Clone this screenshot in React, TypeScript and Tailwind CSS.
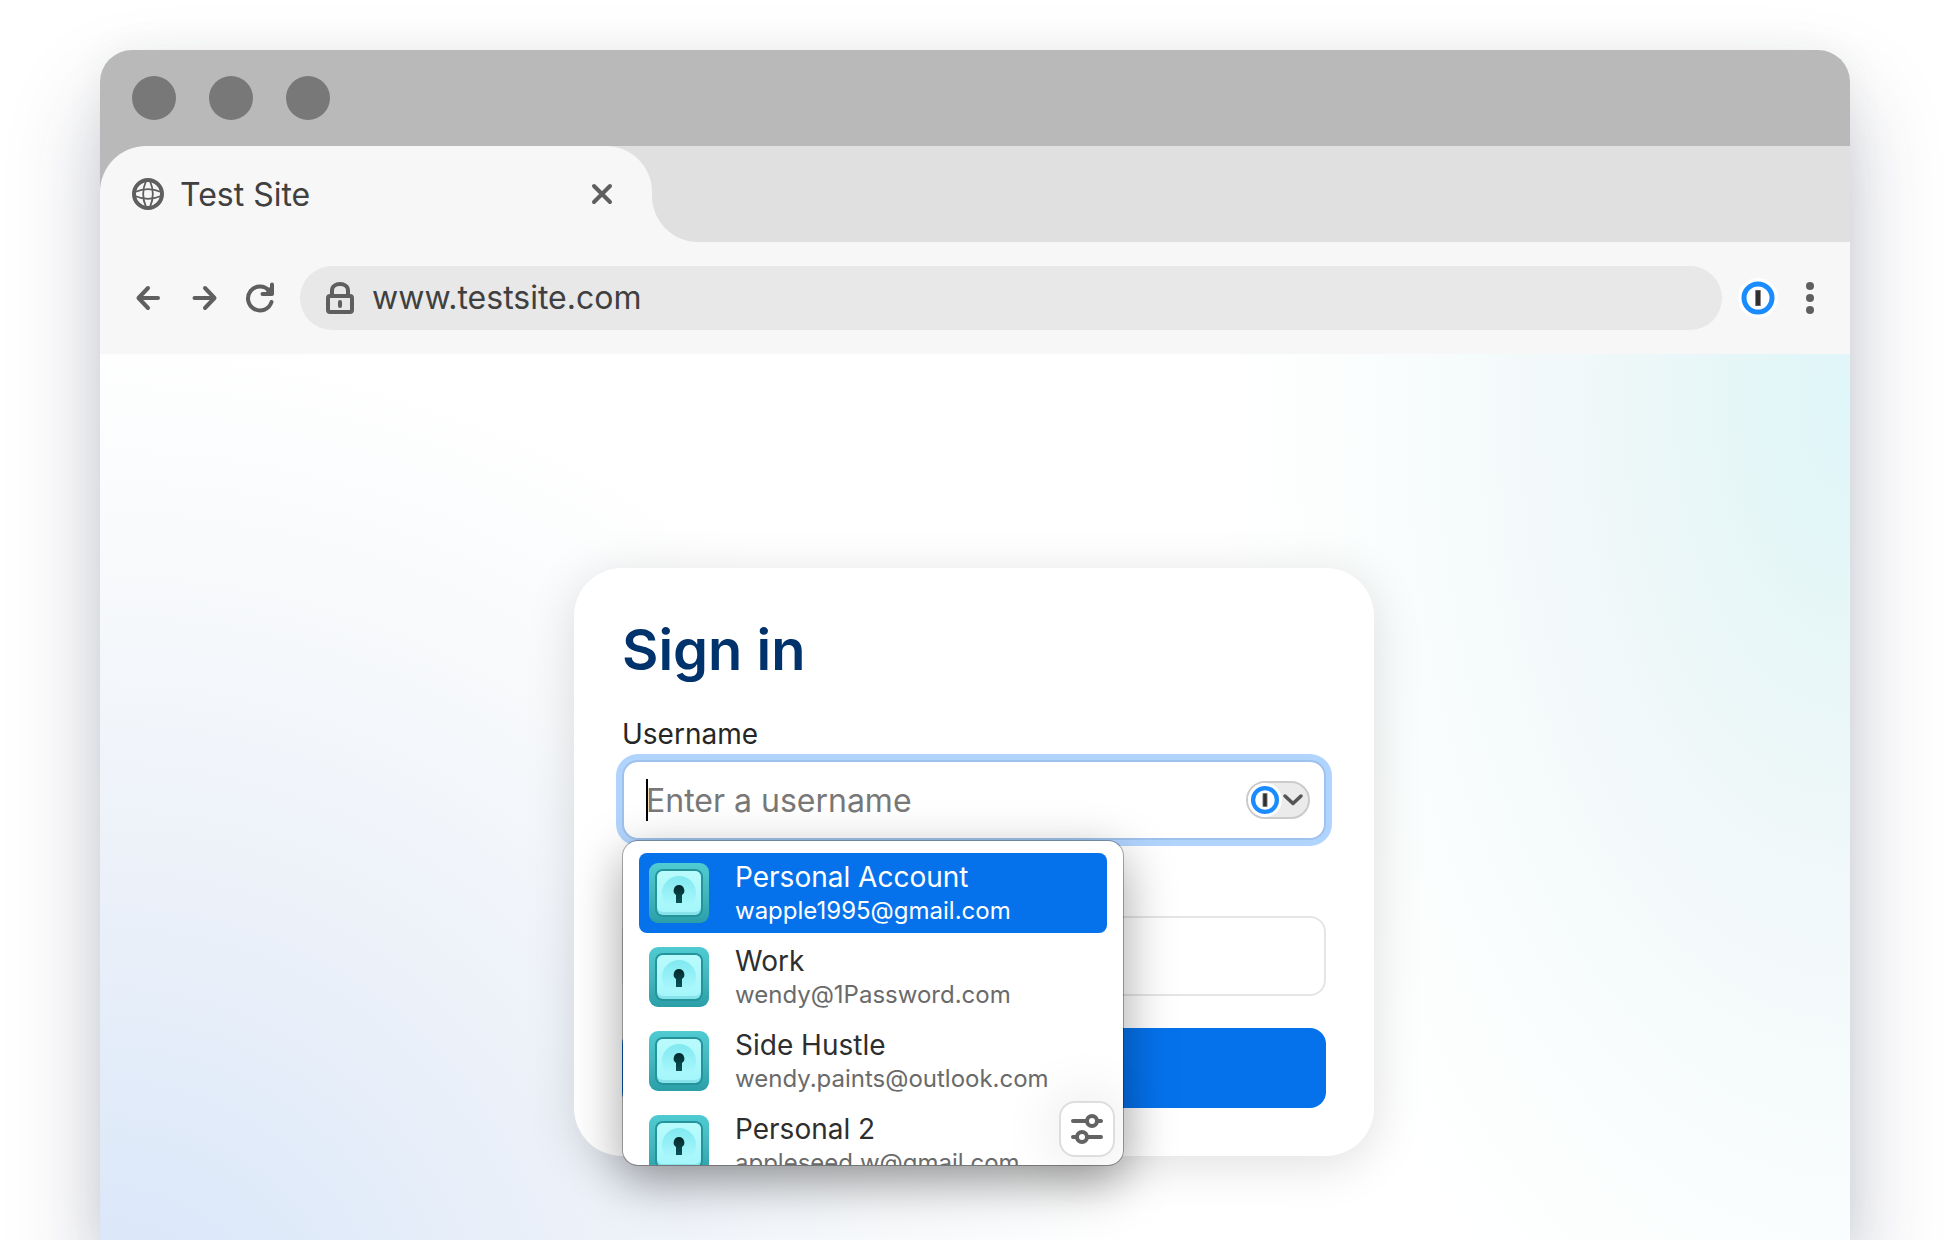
import React from "react";

const accounts = [
  { name: "Personal Account", email: "wapple1995@gmail.com" },
  { name: "Work", email: "wendy@1Password.com" },
  { name: "Side Hustle", email: "wendy.paints@outlook.com" },
  { name: "Personal 2", email: "appleseed.w@gmail.com" },
];

function Globe() {
  return (
    <svg className="size-8 shrink-0" viewBox="0 0 32 32" fill="none" stroke="#5f5f5f" aria-hidden="true">
      <circle cx="16" cy="16" r="14" strokeWidth="4" />
      <path d="M14 3C10.5 11 10.5 21 14 29M18 3C21.5 11 21.5 21 18 29" strokeWidth="1.800" />
      <path d="M3 14C11 10.500 21 10.500 29 14M3 18C11 21.500 21 21.500 29 18" strokeWidth="1.800" />
    </svg>
  );
}

function Close() {
  return (
    <svg className="size-8" viewBox="0 0 32 32" fill="none" stroke="#5f5f5f" strokeWidth="4" strokeLinecap="round" aria-hidden="true">
      <path d="M8 8l16 16M24 8L8 24" />
    </svg>
  );
}

function ArrowLeft() {
  return (
    <svg className="size-8" viewBox="0 0 32 32" fill="none" stroke="#5f5f5f" strokeWidth="4" strokeLinecap="round" strokeLinejoin="round" aria-hidden="true">
      <path d="M26 16H7M16 6L6.500 16L16 26" />
    </svg>
  );
}

function ArrowRight() {
  return (
    <svg className="size-8" viewBox="0 0 32 32" fill="none" stroke="#5f5f5f" strokeWidth="4" strokeLinecap="round" strokeLinejoin="round" aria-hidden="true">
      <path d="M6.500 16H26M17 6L26.500 16L17 26" />
    </svg>
  );
}

function Reload() {
  return (
    <svg className="size-8" viewBox="0 0 32 32" fill="none" stroke="#5f5f5f" strokeWidth="4" strokeLinecap="round" strokeLinejoin="round" aria-hidden="true">
      <path d="M27.500 20A12 12 0 1 1 25 8.500" />
      <path d="M28 2.500V12H18.500" />
      <path d="M23 6L28 5V11H22Z" fill="#5f5f5f" stroke="none" />
    </svg>
  );
}

function Lock() {
  return (
    <svg className="size-8 shrink-0" viewBox="0 0 32 32" fill="none" stroke="#5f5f5f" aria-hidden="true">
      <rect x="4" y="14" width="24" height="16" rx="2" strokeWidth="4" />
      <path d="M8 14V8.500C8 4.500 11.500 2 16 2S24 4.500 24 8.500V14" strokeWidth="4" />
      <path d="M16 20V24" strokeWidth="4" strokeLinecap="round" />
    </svg>
  );
}

function KeyholeRing({ className }: { className: string }) {
  return (
    <svg className={className} viewBox="0 0 40 40" aria-hidden="true">
      <circle cx="20" cy="20" r="20" fill="#fff" />
      <circle cx="20" cy="20" r="14" fill="#fff" stroke="#1a8cff" strokeWidth="5" />
      <rect x="17" y="12" width="6" height="16" fill="#888" />
      <rect x="18" y="12.500" width="4" height="15" fill="#2f2f2f" />
    </svg>
  );
}

function VaultIcon() {
  return (
    <svg className="size-[60px] shrink-0" viewBox="0 0 60 60" aria-hidden="true">
      <defs>
        <linearGradient id="vault-frame" x1="0" y1="0" x2="0" y2="1">
          <stop offset="0" stopColor="#50cbd2" />
          <stop offset="0.500" stopColor="#43b7bd" />
          <stop offset="1" stopColor="#2a9fa8" />
        </linearGradient>
        <linearGradient id="vault-door" x1="0" y1="0" x2="0" y2="1">
          <stop offset="0" stopColor="#b9fbfd" />
          <stop offset="1" stopColor="#a4f6fb" />
        </linearGradient>
        <linearGradient id="vault-dial" x1="0" y1="0" x2="0" y2="1">
          <stop offset="0" stopColor="#80e9f0" />
          <stop offset="0.850" stopColor="#a8f7fb" />
        </linearGradient>
        <linearGradient id="vault-hole" x1="0" y1="0" x2="0" y2="1">
          <stop offset="0" stopColor="#03292c" />
          <stop offset="1" stopColor="#0a5257" />
        </linearGradient>
      </defs>
      <rect width="60" height="60" rx="9" fill="url(#vault-frame)" />
      <rect x="6" y="6" width="48" height="48" rx="8" fill="#24949c" />
      <rect x="8" y="8" width="44" height="44" rx="6" fill="#85e3e9" />
      <rect x="8" y="8" width="44" height="41" rx="6" fill="url(#vault-door)" />
      <circle cx="30" cy="30" r="17" fill="url(#vault-dial)" />
      <path d="M30 22a5.500 5.500 0 0 1 3 10v8h-6v-8a5.500 5.500 0 0 1 3-10Z" fill="url(#vault-hole)" />
    </svg>
  );
}

function Sliders() {
  return (
    <svg className="size-8" viewBox="0 0 32 32" fill="none" stroke="#636363" strokeWidth="4" strokeLinecap="round" aria-hidden="true">
      <path d="M2 8H30M2 24H30" />
      <circle cx="21" cy="8" r="5" fill="#fff" />
      <circle cx="11" cy="24" r="5" fill="#fff" />
    </svg>
  );
}

function AccountMenu() {
  return (
    <div className="absolute top-full left-0 z-10 h-[326px] w-[502px] rounded-2xl border border-black/30 bg-white bg-clip-padding shadow-[0_16px_50px_rgba(0,0,0,0.36)]">
      <ul className="flex h-full flex-col gap-1 overflow-hidden rounded-[15px] px-4 pt-3">
        {accounts.map((account, i) => (
          <li key={account.email} className="shrink-0">
            <button
              type="button"
              className={
                i === 0
                  ? "flex h-20 w-full items-center gap-[26px] rounded-lg bg-[#0572ec] px-2.5 text-left text-white"
                  : "flex h-20 w-full items-center gap-[26px] rounded-lg px-2.5 text-left text-[#2e2e2e]"
              }
            >
              <VaultIcon />
              <span className="flex flex-col">
                <span className="text-[28px] leading-9">{account.name}</span>
                <span className={i === 0 ? "text-2xl leading-8" : "text-2xl leading-8 text-[#6a6a6a]"}>{account.email}</span>
              </span>
            </button>
          </li>
        ))}
      </ul>
      <button
        type="button"
        aria-label="Filter accounts"
        className="absolute right-2 bottom-2 flex size-14 items-center justify-center rounded-2xl border-2 border-[#dedede] bg-white shadow-[0_0_60px_rgba(0,0,0,0.12)]"
      >
        <Sliders />
      </button>
    </div>
  );
}

export default function App() {
  return (
    <div className="flex min-h-screen flex-col overflow-hidden bg-white px-[100px] pt-[50px] font-['Inter',sans-serif]">
      <div className="flex grow flex-col rounded-t-[32px] shadow-[0_50px_90px_rgba(40,45,80,0.26),0_0_40px_rgba(0,0,0,0.05)]">
        <header>
          <div className="flex h-24 items-center gap-[33px] rounded-t-[32px] bg-[#b9b9b9] px-8">
            <span className="size-11 rounded-full bg-[#787878]" />
            <span className="size-11 rounded-full bg-[#787878]" />
            <span className="size-11 rounded-full bg-[#787878]" />
          </div>
          <div className="flex h-24 bg-[#f7f7f7]">
            <div className="w-[552px] bg-linear-to-r from-[#b9b9b9] from-50% to-[#e0e0e0] to-50%">
              <div className="flex h-full items-center gap-4 rounded-t-[46px] bg-[#f7f7f7] pr-[34px] pl-8">
                <Globe />
                <span className="grow text-[32px] leading-[41px] text-[#404040]">Test Site</span>
                <button type="button" aria-label="Close tab">
                  <Close />
                </button>
              </div>
            </div>
            <div className="grow rounded-bl-[46px] bg-[#e0e0e0]" />
          </div>
          <div className="flex h-28 items-center bg-[#f7f7f7] pr-6 pl-8">
            <nav className="flex gap-6 pr-6">
              <button type="button" aria-label="Back">
                <ArrowLeft />
              </button>
              <button type="button" aria-label="Forward">
                <ArrowRight />
              </button>
              <button type="button" aria-label="Reload">
                <Reload />
              </button>
            </nav>
            <div className="flex h-16 grow items-center gap-4 rounded-full bg-[#e8e8e8] px-6">
              <Lock />
              <input
                type="text"
                aria-label="Address"
                defaultValue="www.testsite.com"
                className="h-10 min-w-0 grow bg-transparent text-[32px] leading-10 text-[#404040] outline-none"
              />
            </div>
            <button type="button" aria-label="Password manager" className="ml-4">
              <KeyholeRing className="size-10" />
            </button>
            <button type="button" aria-label="Menu" className="ml-4 flex w-8 flex-col items-center gap-1">
              <span className="size-2 rounded-full bg-[#5f5f5f]" />
              <span className="size-2 rounded-full bg-[#5f5f5f]" />
              <span className="size-2 rounded-full bg-[#5f5f5f]" />
            </button>
          </div>
        </header>
        <main className="grow bg-white bg-[radial-gradient(ellipse_36%_125%_at_100%_5%,#dff6fa_0%,#e4f6f7_14%,#f0f8f9_42%,#fafdfd_75%,#ffffff00_100%),radial-gradient(ellipse_60%_118%_at_0%_115%,#d8e5fa_0%,#dde9f9_18%,#ecf1f9_48%,#f7f9fb_76%,#ffffff00_100%)] pt-[214px] pr-0.5">
          <form className="mx-auto max-w-[800px] rounded-[48px] bg-white p-12 shadow-[0_8px_50px_rgba(0,0,0,0.13)]">
            <h1 className="text-[56px] leading-[68px] font-semibold text-[#00326b]">Sign in</h1>
            <label htmlFor="username" className="mt-8 mb-2 block text-[28px] leading-9 text-[#262626]">
              Username
            </label>
            <div className="relative">
              <input
                id="username"
                type="text"
                placeholder="Enter a username"
                className="block h-20 w-full rounded-2xl border-2 border-[#9fc2ec] bg-white pr-24 pl-[22px] text-[32px] text-[#222] ring-6 ring-[#b1d4fe] outline-none placeholder:text-[#787878]"
              />
              <span className="absolute top-[19px] left-6 h-[42px] w-0.5 bg-black" />
              <button
                type="button"
                aria-label="Show saved accounts"
                className="absolute top-[21px] right-4 flex h-[38px] w-16 items-center justify-between rounded-full border-2 border-[#cbcbcb] bg-[#ebebeb] pr-1"
              >
                <KeyholeRing className="size-[34px]" />
                <svg className="size-[22px]" viewBox="0 0 22 22" fill="none" stroke="#555" strokeWidth="3.500" strokeLinecap="round" strokeLinejoin="round" aria-hidden="true">
                  <path d="M3 7L11 14.500L19 7" />
                </svg>
              </button>
              <AccountMenu />
            </div>
            <input
              type="password"
              aria-label="Password"
              className="mt-[76px] block h-20 w-full rounded-2xl border-2 border-[#e5e5e5] bg-white px-[22px] text-[32px] outline-none"
            />
            <button type="submit" aria-label="Sign in" className="mt-8 block h-20 w-full rounded-2xl bg-[#0572ec]" />
          </form>
        </main>
      </div>
    </div>
  );
}
